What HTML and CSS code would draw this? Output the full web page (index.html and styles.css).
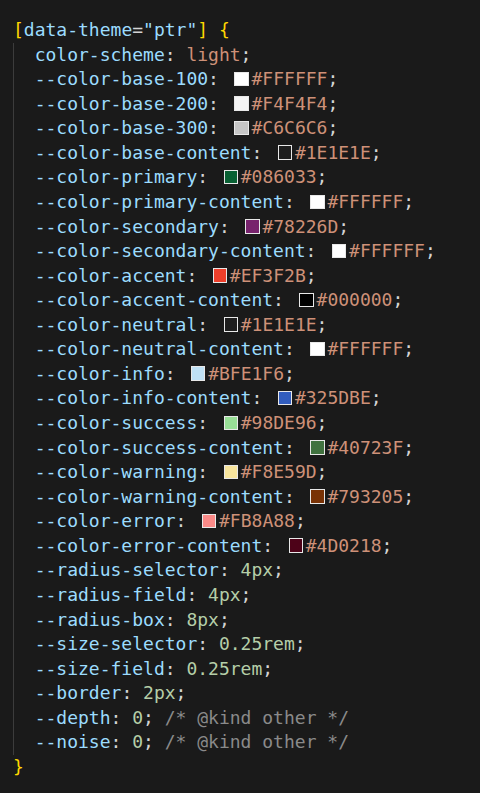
FILE: index.html
```html
<!DOCTYPE html>
<html>
<head>
<meta charset="utf-8">
<link rel="stylesheet" href="styles.css">
</head>
<body>
<div class="code">
  <div class="line"><span class="br">[</span><span class="prop">data-theme</span><span class="pun">=</span><span class="prop">"ptr"</span><span class="br">]</span> <span class="br">{</span></div>
  <div class="block">
    <div class="line"><span class="prop">color-scheme</span><span class="pun">:</span> <span class="val">light</span><span class="pun">;</span></div>
    <div class="line"><span class="prop">--color-base-100</span><span class="pun">:</span> <span class="sw" style="background:#FFFFFF"></span><span class="val">#FFFFFF</span><span class="pun">;</span></div>
    <div class="line"><span class="prop">--color-base-200</span><span class="pun">:</span> <span class="sw" style="background:#F4F4F4"></span><span class="val">#F4F4F4</span><span class="pun">;</span></div>
    <div class="line"><span class="prop">--color-base-300</span><span class="pun">:</span> <span class="sw" style="background:#C6C6C6"></span><span class="val">#C6C6C6</span><span class="pun">;</span></div>
    <div class="line"><span class="prop">--color-base-content</span><span class="pun">:</span> <span class="sw" style="background:#1E1E1E"></span><span class="val">#1E1E1E</span><span class="pun">;</span></div>
    <div class="line"><span class="prop">--color-primary</span><span class="pun">:</span> <span class="sw" style="background:#086033"></span><span class="val">#086033</span><span class="pun">;</span></div>
    <div class="line"><span class="prop">--color-primary-content</span><span class="pun">:</span> <span class="sw" style="background:#FFFFFF"></span><span class="val">#FFFFFF</span><span class="pun">;</span></div>
    <div class="line"><span class="prop">--color-secondary</span><span class="pun">:</span> <span class="sw" style="background:#78226D"></span><span class="val">#78226D</span><span class="pun">;</span></div>
    <div class="line"><span class="prop">--color-secondary-content</span><span class="pun">:</span> <span class="sw" style="background:#FFFFFF"></span><span class="val">#FFFFFF</span><span class="pun">;</span></div>
    <div class="line"><span class="prop">--color-accent</span><span class="pun">:</span> <span class="sw" style="background:#EF3F2B"></span><span class="val">#EF3F2B</span><span class="pun">;</span></div>
    <div class="line"><span class="prop">--color-accent-content</span><span class="pun">:</span> <span class="sw" style="background:#000000"></span><span class="val">#000000</span><span class="pun">;</span></div>
    <div class="line"><span class="prop">--color-neutral</span><span class="pun">:</span> <span class="sw" style="background:#1E1E1E"></span><span class="val">#1E1E1E</span><span class="pun">;</span></div>
    <div class="line"><span class="prop">--color-neutral-content</span><span class="pun">:</span> <span class="sw" style="background:#FFFFFF"></span><span class="val">#FFFFFF</span><span class="pun">;</span></div>
    <div class="line"><span class="prop">--color-info</span><span class="pun">:</span> <span class="sw" style="background:#BFE1F6"></span><span class="val">#BFE1F6</span><span class="pun">;</span></div>
    <div class="line"><span class="prop">--color-info-content</span><span class="pun">:</span> <span class="sw" style="background:#325DBE"></span><span class="val">#325DBE</span><span class="pun">;</span></div>
    <div class="line"><span class="prop">--color-success</span><span class="pun">:</span> <span class="sw" style="background:#98DE96"></span><span class="val">#98DE96</span><span class="pun">;</span></div>
    <div class="line"><span class="prop">--color-success-content</span><span class="pun">:</span> <span class="sw" style="background:#40723F"></span><span class="val">#40723F</span><span class="pun">;</span></div>
    <div class="line"><span class="prop">--color-warning</span><span class="pun">:</span> <span class="sw" style="background:#F8E59D"></span><span class="val">#F8E59D</span><span class="pun">;</span></div>
    <div class="line"><span class="prop">--color-warning-content</span><span class="pun">:</span> <span class="sw" style="background:#793205"></span><span class="val">#793205</span><span class="pun">;</span></div>
    <div class="line"><span class="prop">--color-error</span><span class="pun">:</span> <span class="sw" style="background:#FB8A88"></span><span class="val">#FB8A88</span><span class="pun">;</span></div>
    <div class="line"><span class="prop">--color-error-content</span><span class="pun">:</span> <span class="sw" style="background:#4D0218"></span><span class="val">#4D0218</span><span class="pun">;</span></div>
    <div class="line"><span class="prop">--radius-selector</span><span class="pun">:</span> <span class="num">4px</span><span class="pun">;</span></div>
    <div class="line"><span class="prop">--radius-field</span><span class="pun">:</span> <span class="num">4px</span><span class="pun">;</span></div>
    <div class="line"><span class="prop">--radius-box</span><span class="pun">:</span> <span class="num">8px</span><span class="pun">;</span></div>
    <div class="line"><span class="prop">--size-selector</span><span class="pun">:</span> <span class="num">0.25rem</span><span class="pun">;</span></div>
    <div class="line"><span class="prop">--size-field</span><span class="pun">:</span> <span class="num">0.25rem</span><span class="pun">;</span></div>
    <div class="line"><span class="prop">--border</span><span class="pun">:</span> <span class="num">2px</span><span class="pun">;</span></div>
    <div class="line"><span class="prop">--depth</span><span class="pun">:</span> <span class="num">0</span><span class="pun">;</span> <span class="com">/* @kind other */</span></div>
    <div class="line"><span class="prop">--noise</span><span class="pun">:</span> <span class="num">0</span><span class="pun">;</span> <span class="com">/* @kind other */</span></div>
  </div>
  <div class="line"><span class="br">}</span></div>
</div>
</body>
</html>
```

FILE: styles.css
```css
html, body {
  margin: 0;
  padding: 0;
  background: #1a1a1a;
}

.code {
  padding: 18px 0 0 13px;
  font-family: "DejaVu Sans Mono", "Liberation Mono", monospace;
  font-size: 18px;
  color: #d4d4d4;
}

.line {
  height: 24.57px;
  line-height: 24.57px;
  white-space: pre;
}

.block {
  border-left: 1px solid #3c3c3c;
  padding-left: calc(2ch - 1px);
}

.br { color: #ffd700; }
.prop { color: #9cdcfe; }
.pun { color: #d4d4d4; }
.val { color: #ce9178; }
.num { color: #b5cea8; }
.com { color: #8a8a8a; }

.sw {
  display: inline-block;
  box-sizing: border-box;
  width: 14.4px;
  height: 14.4px;
  margin: 0 2.8px 0 4.6px;
  border: 1.6px solid #e8e8e8;
  vertical-align: -1px;
}
```
